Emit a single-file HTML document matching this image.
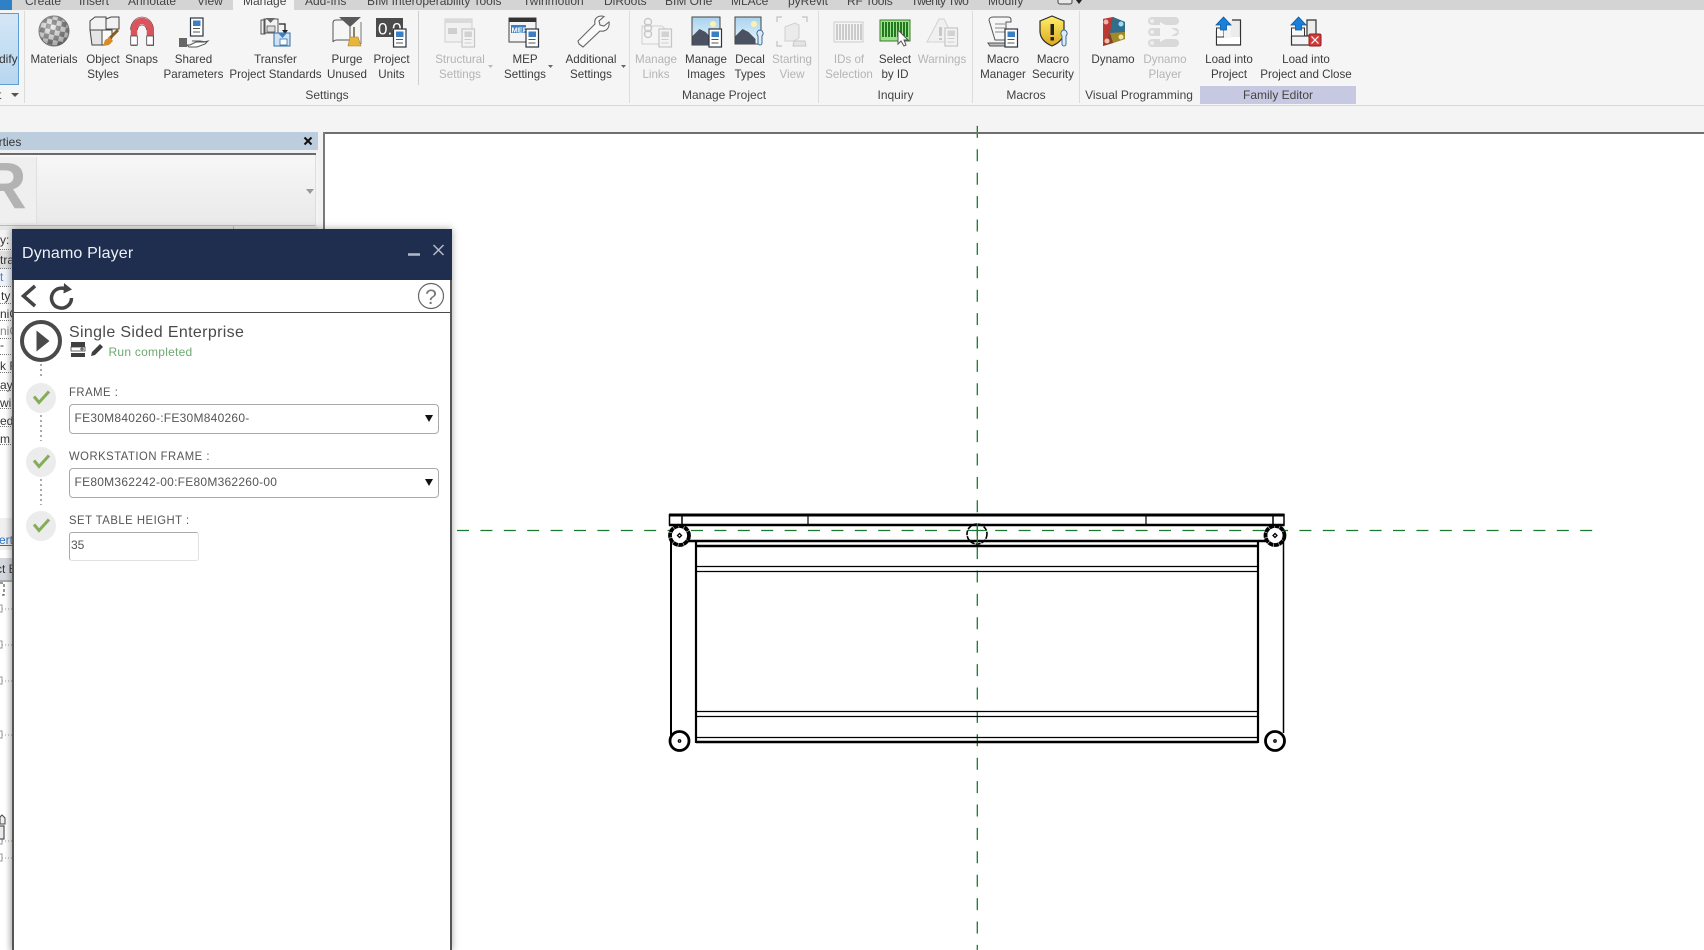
<!DOCTYPE html>
<html><head><meta charset="utf-8"><title>Dynamo Player</title>
<style>
*{box-sizing:border-box}
html,body{margin:0;padding:0;width:1704px;height:950px;overflow:hidden;background:#f4f4f4;font-family:"Liberation Sans",sans-serif;font-size:12px;color:#3b3b3b}
#p{position:relative;width:1704px;height:950px;overflow:hidden}
.a{position:absolute}
.t{position:absolute;top:-6px;line-height:15px;white-space:nowrap;color:#444}
.l{position:absolute;top:51.5px;font-size:11.6px;line-height:15px;text-align:center;white-space:nowrap;transform:translateX(-50%);color:#3c3c3c}
.d{color:#b4b4b4}
.g{position:absolute;top:87px;line-height:16px;white-space:nowrap;transform:translateX(-50%);color:#444}
.s{position:absolute;top:11px;width:1px;height:92px;background:#dcdcdc}
.c{position:absolute;white-space:nowrap;line-height:14px;color:#333}
.dl{position:absolute;left:0;width:13px;border-top:1px dotted #777}
.n{position:absolute;white-space:nowrap;color:#555;line-height:14px;letter-spacing:.55px;transform:scaleX(.94);transform-origin:0 50%}
.b{position:absolute;left:69px;width:370px;height:30px;border:1px solid #aaa;border-radius:4px;background:#fff;line-height:27px;padding-left:4.5px;color:#555;font-size:12px;white-space:nowrap;letter-spacing:.25px}
</style></head><body><div id="p">

<div class="a" style="left:0;top:0;width:1704px;height:10px;background:#d4d4d4"></div>
<div class="a" style="left:0;top:0;width:12px;height:10px;background:#2f80c4"></div>
<div class="a" style="left:233px;top:0;width:61px;height:11px;background:#f5f5f5"></div>
<div class="t" style="left:25px">Create</div><div class="t" style="left:79px">Insert</div><div class="t" style="left:128px">Annotate</div><div class="t" style="left:197px">View</div><div class="t" style="left:243px">Manage</div><div class="t" style="left:305px">Add-Ins</div><div class="t" style="left:367px">BIM Interoperability Tools</div><div class="t" style="left:523px">Twinmotion</div><div class="t" style="left:604px">DiRoots</div><div class="t" style="left:665px">BIM One</div><div class="t" style="left:731px">MLAce</div><div class="t" style="left:788px">pyRevit</div><div class="t" style="left:847px;letter-spacing:-.2px">RF Tools</div><div class="t" style="left:911px;letter-spacing:-.6px">Twenty Two</div><div class="t" style="left:988px">Modify</div>

<div class="a" style="left:0;top:11px;width:1704px;height:94px;background:#f5f5f5;border-bottom:0"></div>
<div class="a" style="left:0;top:105px;width:1704px;height:1px;background:#d6d6d6"></div>
<div class="a" style="left:-2px;top:13px;width:21px;height:72px;background:linear-gradient(#d4e7f6,#b8d6ef);border:1px solid #5c9fd6"></div>
<div class="l" style="left:0;color:#333;font-size:12px">Modify</div>
<div class="a" style="left:-2px;top:87px;line-height:16px;color:#333;font-size:12px">t</div>
<div class="a" style="left:11px;top:93px;width:0;height:0;border:4px solid transparent;border-top:4px solid #555"></div>

<div class="s" style="left:24px"></div><div class="s" style="left:418px;height:74px;background:#cfcfcf"></div><div class="s" style="left:629px"></div><div class="s" style="left:818px"></div><div class="s" style="left:972px"></div><div class="s" style="left:1079px"></div>
<div class="a" style="left:1200px;top:86px;width:156px;height:18px;background:#c7c9e2"></div>

<div class="l" style="left:54px">Materials</div>
<div class="l" style="left:103px">Object<br>Styles</div>
<div class="l" style="left:141.5px">Snaps</div>
<div class="l" style="left:193.5px">Shared<br>Parameters</div>
<div class="l" style="left:275.5px">Transfer<br>Project Standards</div>
<div class="l" style="left:347px">Purge<br>Unused</div>
<div class="l" style="left:391.5px">Project<br>Units</div>
<div class="l d" style="left:460px">Structural<br>Settings</div>
<div class="l" style="left:525px">MEP<br>Settings</div>
<div class="l" style="left:591px">Additional<br>Settings</div>
<div class="l d" style="left:656px">Manage<br>Links</div>
<div class="l" style="left:706px">Manage<br>Images</div>
<div class="l" style="left:750px">Decal<br>Types</div>
<div class="l d" style="left:792px">Starting<br>View</div>
<div class="l d" style="left:849px">IDs of<br>Selection</div>
<div class="l" style="left:895px">Select<br>by ID</div>
<div class="l d" style="left:942px">Warnings</div>
<div class="l" style="left:1003px">Macro<br>Manager</div>
<div class="l" style="left:1053px">Macro<br>Security</div>
<div class="l" style="left:1113px">Dynamo</div>
<div class="l d" style="left:1165px">Dynamo<br>Player</div>
<div class="l" style="left:1229px">Load into<br>Project</div>
<div class="l" style="left:1306px">Load into<br>Project and Close</div>

<div class="g" style="left:327px">Settings</div><div class="g" style="left:724px">Manage Project</div><div class="g" style="left:895.5px">Inquiry</div><div class="g" style="left:1026px">Macros</div><div class="g" style="left:1139px">Visual Programming</div><div class="g" style="left:1278px">Family Editor</div>

<!-- ribbon icons -->
<svg class="a" style="left:0;top:0" width="1704" height="110" viewBox="0 0 1704 110">
<defs>
<pattern id="ck" width="10" height="10" patternUnits="userSpaceOnUse" patternTransform="rotate(12 54 31)"><rect width="10" height="10" fill="#e8e8e8"/><rect width="5" height="5" fill="#707070"/><rect x="5" y="5" width="5" height="5" fill="#808080"/></pattern>
<g id="doc"><rect x="0" y="0" width="12.5" height="18" fill="#fff" stroke="#2c3440" stroke-width="1.2"/><rect x="2.5" y="2.5" width="7.5" height="5.5" fill="#3a7fc1"/><path d="M2.5 10.5h7M2.5 14h7" stroke="#555" fill="none"/></g>
<g id="gdoc"><rect x="0" y="0" width="12.5" height="18" fill="#f3f3f3" stroke="#c6c6c6" stroke-width="1.2"/><rect x="2.5" y="2.5" width="7.5" height="5.5" fill="#d2d2d2"/><path d="M2.5 10.5h7M2.5 14h7" stroke="#ccc" fill="none"/></g>
<linearGradient id="sky" x1="0" y1="0" x2="0" y2="1"><stop offset="0" stop-color="#a9d3ee"/><stop offset="1" stop-color="#eaf5fb"/></linearGradient>
<linearGradient id="shd" x1="0" y1="0" x2="0" y2="1"><stop offset="0" stop-color="#fff06a"/><stop offset="1" stop-color="#dca71c"/></linearGradient>
<radialGradient id="sph" cx=".4" cy=".35" r=".7"><stop offset="0" stop-color="#fff" stop-opacity=".35"/><stop offset="1" stop-color="#333" stop-opacity=".4"/></radialGradient>
</defs>
<!-- Materials -->
<circle cx="54" cy="31" r="15" fill="url(#ck)" stroke="#777"/><circle cx="54" cy="31" r="15" fill="url(#sph)"/>
<!-- Object styles -->
<g stroke="#444" stroke-width="1" fill="#f2f2f2"><path d="M90 21l5-4h11v13H90z"/><path d="M106 19l5-2h8v12h-13z"/><path d="M90 30h12v15H92z" fill="#e4e4e4"/><path d="M102 30h10v8l-6 7h-4z" fill="#fafafa"/></g>
<path d="M118 30l-9 9" stroke="#8a5a20" stroke-width="3"/><path d="M110 37l-5 3-2 6 6-1 4-4z" fill="#d98a2b"/>
<!-- Snaps -->
<path d="M134 46V30a8 9 0 0 1 16 0v16" fill="none" stroke="#d9545c" stroke-width="6.5"/><path d="M130.7 36h6.6v9h-6.6zM146.7 36h6.6v9h-6.6z" fill="#fff" stroke="#444" stroke-width=".8"/><path d="M130.5 30a11.5 13 0 0 1 23 0v16M137.5 30a4.5 5 0 0 1 9 0" fill="none" stroke="#5a2a2e" stroke-width=".6"/>
<!-- Shared parameters -->
<use href="#doc" x="190.5" y="18" /><path d="M187 45h3l6-3h8l4-1-3 3-8 3h-8z" fill="#fff" stroke="#555"/><path d="M192 41h8l6 1" fill="none" stroke="#555"/><rect x="179" y="38" width="8" height="9" fill="#666"/>
<!-- Transfer -->
<path d="M261 20h4v14h-4z M264 19h14v14h-14z" fill="#f2f2f2" stroke="#555"/><path d="M266 18h9l-4.5 5z" fill="#666"/><rect x="267" y="26" width="8" height="6" fill="#ddd" stroke="#444" stroke-width=".7"/><path d="M279 24h6v7" fill="none" stroke="#222" stroke-width="1.3"/><path d="M282 30h6l-3 4z" fill="#222"/><path d="M274 33h16v13h-16z" fill="#cfe3f4" stroke="#2c6ea8"/><path d="M278 33h9l-4.5 5z" fill="#3a7fc1"/><rect x="280" y="39" width="7" height="6" fill="#fff" stroke="#2c6ea8" stroke-width=".8"/>
<!-- Purge -->
<path d="M333 23c0-3 2-3 3-3h14v20h-13c-3 0-4 2-4 2z" fill="#f6f6f6" stroke="#555"/><path d="M339 17h22l-11 10z" fill="#5a5a5a"/><path d="M361 22v22" stroke="#777"/><path d="M354 27v10" stroke="#6b5a35" stroke-width="1.5"/><path d="M350 37h8l3 9h-13z" fill="#e8b53a" stroke="#a7801e" stroke-width=".6"/>
<!-- Units -->
<rect x="376" y="18" width="27" height="19" fill="#4b4b4b"/><text x="378" y="34.5" font-family="Liberation Sans" font-size="17" fill="#fff">0.0</text><use href="#doc" x="393.5" y="29"/>
<!-- Structural -->
<rect x="445" y="19" width="27" height="23" fill="#f1f1f1" stroke="#cfcfcf"/><path d="M445 19h27v4h-27z" fill="#dadada"/><rect x="448" y="28" width="9" height="6" fill="#cfcfcf"/><use href="#gdoc" x="462" y="29"/>
<!-- MEP -->
<rect x="509" y="18" width="27" height="24" fill="#f4f4f4" stroke="#444"/><rect x="509" y="18" width="27" height="4" fill="#333"/><rect x="511" y="25" width="15" height="8" fill="#3a7fc1"/><text x="511.5" y="32.5" font-family="Liberation Sans" font-size="7.5" font-weight="bold" fill="#fff">MEP</text><use href="#doc" x="526" y="29"/>
<!-- Wrench -->
<path d="M579 44l-1-3 17-17c-1-4 1-8 7-8l2 .5-5 4.5 1 4 4 1 5-4c1 6-3 10-9 9l-17 16z" fill="#fafafa" stroke="#666" stroke-width="1.1"/>
<!-- Manage links -->
<path d="M642 26h20l8 8v10h-28z" fill="#f5f5f5" stroke="#cfcfcf"/><circle cx="648" cy="22" r="3.5" fill="none" stroke="#c9c9c9" stroke-width="1.5"/><circle cx="648" cy="28" r="3.5" fill="none" stroke="#c9c9c9" stroke-width="1.5"/><circle cx="648" cy="34" r="3.5" fill="none" stroke="#c9c9c9" stroke-width="1.5"/><use href="#gdoc" x="659" y="29"/>
<!-- Manage images -->
<rect x="692" y="17" width="28" height="28" fill="url(#sky)" stroke="#444"/><circle cx="713" cy="24" r="3" fill="#fdf3b0"/><path d="M692.5 45v-9l7-7 6 3 7 7v6z" fill="#4a5161"/><use href="#doc" x="709" y="29"/>
<!-- Decal -->
<rect x="735" y="17" width="26" height="27" fill="url(#sky)" stroke="#444"/><circle cx="754" cy="24" r="3" fill="#fdf3b0"/><path d="M735.5 44v-8l7-7 6 3 7 7v5z" fill="#4a5161"/><path d="M760 30a3.5 3.5 0 0 0-2 6v7a2 2 0 0 0 4 0v-7a3.5 3.5 0 0 0-2-6z" fill="#dfeaf4" stroke="#3a6f9c"/>
<!-- Starting view -->
<path d="M777 22v-5h5M802 17h5v5M777 41v5h5" fill="none" stroke="#c2c2c2" stroke-width="1.2"/><path d="M785 27l10-4 4 2v13l-5 3h-9z" fill="#ebebeb" stroke="#d0d0d0"/><path d="M794 41h11l1 5h-13z" fill="#e4e4e4" stroke="#c8c8c8"/>
<!-- IDs -->
<rect x="834" y="22" width="29" height="20" fill="#f5f5f5" stroke="#cdcdcd"/><path d="M837 24v16M840 24v16M843 24v16M846 24v16M849 24v16M852 24v16M855 24v16M858 24v16M861 24v16" stroke="#bdbdbd" stroke-width="1.5"/>
<!-- Select by ID -->
<rect x="880" y="20" width="30" height="21" fill="#9fe08f" stroke="#3a7a2c"/><path d="M883 22v15M886 22v15M889 22v15M892 22v15M895 22v15M898 22v15M901 22v15M904 22v15M907 22v15" stroke="#136e10" stroke-width="1.8"/><path d="M898 30v14l3-3 3 5 2-1-2-5h4z" fill="#fff" stroke="#555"/>
<!-- Warnings -->
<path d="M927 42l12-23 5 0 8 16v7z" fill="#f0f0f0" stroke="#d2d2d2"/><path d="M939 27h3v9h-3zM939 38h3v2h-3z" fill="#c7c7c7"/><use href="#gdoc" x="945" y="28"/>
<!-- Macro manager -->
<path d="M989 20c0-2 2-3 4-3h15c2 0 3 1 3 3v2h-5v18h-11z" fill="#f6f6f6" stroke="#555"/><path d="M995 24h10M995 28h10M995 32h10" stroke="#888"/><path d="M988 43h19l-2 3h-15z" fill="#bbb" stroke="#555"/><use href="#doc" x="1005" y="29"/>
<!-- Macro security -->
<path d="M1052 16l-12 5v10c0 7 5 12 12 15 7-3 12-8 12-15V21z" fill="url(#shd)" stroke="#2c2c2c" stroke-width="1.2"/><path d="M1050.5 24h3.5v11h-3.5zM1050.5 37h3.5v3.5h-3.5z" fill="#222"/><path d="M1064 30a3.5 3.5 0 0 0-2 6v8a2 2 0 0 0 4 0v-8a3.5 3.5 0 0 0-2-6z" fill="#dfeaf4" stroke="#3a6f9c"/>
<!-- Dynamo -->
<path d="M1103 19l10-2 12 5v17l-12 4-10 3z" fill="#7d4a3e"/><path d="M1103 19l10-2-3 16-7 13z" fill="#b83a32"/><path d="M1113 17l12 5v10l-15 1z" fill="#2f6f8c"/><path d="M1110 33l15-1v7l-12 4z" fill="#9f8a2a"/><path d="M1103 46l7-13 3 10z" fill="#8a3f2c"/><circle cx="1106" cy="22" r="2.5" fill="#f3b0b0"/><circle cx="1121" cy="24" r="2.5" fill="#9fdcf2"/><circle cx="1121" cy="37" r="2.5" fill="#f3e6a0"/><circle cx="1107" cy="41" r="2.5" fill="#f2c0a0"/>
<!-- Player -->
<g fill="#d9d9d9"><rect x="1148" y="17" width="31" height="8" rx="4"/><rect x="1148" y="28" width="31" height="8" rx="4"/><rect x="1148" y="39" width="31" height="8" rx="4"/></g><path d="M1160 22l18 10-18 10z" fill="#f5f5f5"/><circle cx="1152" cy="21" r="2" fill="#eee"/><circle cx="1152" cy="32" r="2" fill="#eee"/><circle cx="1152" cy="43" r="2" fill="#eee"/>
<!-- Load into project -->
<path d="M1232 20h8.5v25h-24V31h7.5" fill="#ececec" stroke="#333" stroke-width="1.2"/><rect x="1217" y="37" width="23" height="7" fill="#fff"/><rect x="1216.5" y="28" width="7.5" height="9" fill="#f8f8f8" stroke="#333"/><path d="M1224 26h7v12h-7z" fill="#f4f4f4"/><path d="M1223.5 17l-7.5 8h4.5v5h6v-5h4.5z" fill="#1a7fd8" stroke="#0b5a9e" stroke-width=".8"/>
<!-- Load into close -->
<path d="M1307 20h9v16h-9z" fill="#ececec" stroke="#333" stroke-width="1.2"/><rect x="1291.5" y="36" width="24" height="9" fill="#f4f4f4" stroke="#333" stroke-width="1.2"/><rect x="1291.5" y="28" width="13" height="8" fill="#f8f8f8" stroke="#333"/><path d="M1298.5 17l-7.5 8h4.5v5h6v-5h4.5z" fill="#1a7fd8" stroke="#0b5a9e" stroke-width=".8"/><rect x="1309" y="34" width="12" height="12" rx="1.5" fill="#d23a3a" stroke="#8f1f1f"/><path d="M1311.5 36.5l7 7M1318.5 36.5l-7 7" stroke="#fff" stroke-width="1.2"/>
<!-- dropdown arrows -->
<path d="M488 65h5l-2.5 3z" fill="#bbb"/><path d="M548 65h5l-2.5 3zM621 65h5l-2.5 3z" fill="#666"/>
<!-- tab icon -->
<rect x="1058" y="-4" width="14" height="8" rx="2" fill="#e8e8e8" stroke="#444"/><path d="M1076 0h6l-3 4z" fill="#222"/>
</svg>

<!-- properties panel -->
<div class="a" style="left:0;top:132px;width:318px;height:18px;background:#bccede"></div>
<div class="a" style="left:-8px;top:135px;line-height:14px;color:#333;font-size:12px">erties</div>
<svg class="a" style="left:303px;top:136px" width="10" height="10"><path d="M1.5 1.5l7 7M8.5 1.5l-7 7" stroke="#111" stroke-width="2"/></svg>
<div class="a" style="left:0;top:150px;width:318px;height:3px;background:#eef0f2"></div>
<div class="a" style="left:0;top:153px;width:316px;height:2px;background:#6a6a6a"></div>
<div class="a" style="left:0;top:155px;width:316px;height:71px;background:linear-gradient(#f7f7f7,#e9e9e9);border-right:1px solid #ddd;border-bottom:1px solid #bbb"></div>
<div class="a" style="left:0;top:157px;width:37px;height:66px;background:#efefef;border-right:1px solid #e0e0e0;overflow:hidden"><div style="position:absolute;left:-21px;top:-10px;font:bold 66px 'Liberation Sans',sans-serif;color:#b3b3b3">R</div></div>
<div class="a" style="left:306px;top:189px;width:0;height:0;border:4.5px solid transparent;border-top:5px solid #9a9a9a"></div>
<div class="a" style="left:0;top:226px;width:318px;height:4px;background:#e6e6e6"></div>
<div class="a" style="left:233px;top:226px;width:1px;height:4px;background:#bbb"></div>
<div class="a" style="left:318px;top:132px;width:5px;height:98px;background:#f2f2f2"></div>

<!-- canvas -->
<div class="a" style="left:323px;top:133px;width:1381px;height:817px;background:#fff"></div>
<svg class="a" style="left:0;top:0" width="1704" height="950" viewBox="0 0 1704 950">
<path d="M977.3 125.9V950" stroke="#1b7a30" stroke-width="1.3" stroke-dasharray="12 11.4" fill="none"/>
<path d="M457 530.5H1597" stroke="#1b7a30" stroke-width="1.3" stroke-dasharray="12 11.4" fill="none"/>
<g fill="none" stroke="#000">
<path d="M669 515H1284.5" stroke-width="3"/>
<path d="M669 525H1284.5" stroke-width="2.5"/>
<path d="M669.5 514v11.5M682 515v10M1273 515v10M1284 514v11.5" stroke-width="1.5"/>
<path d="M808 515v10M1146 515v10" stroke-width="1.2"/>
<path d="M671 541H1284" stroke-width="2.4"/>
<path d="M696 546H1258" stroke-width="2.4"/>
<path d="M696 566.5H1258M696 571.5H1258" stroke-width="1.2"/>
<path d="M696 711.5H1258M696 716.5H1258M696 737.5H1258" stroke-width="1.2"/>
<path d="M696 742H1258" stroke-width="2.4"/>
<path d="M671 541V736" stroke-width="2"/>
<path d="M696 541V743" stroke-width="2.2"/>
<path d="M1258 541V743" stroke-width="2.2"/>
<path d="M1283.5 541V733" stroke-width="1.5"/>
</g>
<g fill="#fff" stroke="#000">
<circle cx="679.5" cy="535.5" r="9.5" stroke-width="3.8" stroke-dasharray="5 .5"/>
<circle cx="1275" cy="535.5" r="9.5" stroke-width="3.8" stroke-dasharray="5 .5"/>
<circle cx="679.5" cy="741" r="9.5" stroke-width="2.8"/>
<circle cx="1275" cy="741" r="9.5" stroke-width="2.8"/>
</g>
<circle cx="977" cy="534" r="10" fill="none" stroke="#000" stroke-width="1.6" stroke-dasharray="5 1"/>
<path d="M967 530.5h20" stroke="#1b7a30" stroke-width="1"/>
<path d="M977.3 524v20" stroke="#1b7a30" stroke-width="1.3"/>
<g fill="none" stroke="#000" stroke-width="1.3"><path d="M679.5 533.5l2 2-2 2-2-2zM1275 533.5l2 2-2 2-2-2z"/><circle cx="679.5" cy="741" r="1.2"/><circle cx="1275" cy="741" r="1.2"/></g>
</svg>
<div class="a" style="left:323px;top:132px;width:1381px;height:2px;background:#6f6f6f"></div>
<div class="a" style="left:323px;top:132px;width:2px;height:100px;background:#7a7a7a"></div>

<!-- left strip under panel -->
<div class="a" style="left:0;top:230px;width:13px;height:720px;background:#fff;overflow:hidden">
 <div class="a" style="left:0;top:0;width:13px;height:21px;background:#f3f3f3"></div>
 <div class="a" style="left:0;top:21px;width:13px;height:18px;background:#dedede"></div>
 <div class="a" style="left:0;top:39px;width:13px;height:17px;background:#edf3fa"></div>
 <div class="c" style="left:0;top:3px">y:</div>
 <div class="c" style="left:0;top:23px">tra</div>
 <div class="c" style="left:-6px;top:40px;color:#5a7fb5">ct</div>
 <div class="c" style="left:1px;top:59px">ty</div>
 <div class="c" style="left:0;top:77px">niC</div>
 <div class="c" style="left:0;top:94px;color:#888">niC</div>
 <div class="c" style="left:0;top:108px">-</div>
 <div class="c" style="left:0;top:129px">k F</div>
 <div class="c" style="left:0;top:148px">ays</div>
 <div class="c" style="left:0;top:166px">wi</div>
 <div class="c" style="left:0;top:184px">ed</div>
 <div class="c" style="left:0;top:202px">m</div>
 <div class="dl" style="top:19px"></div><div class="dl" style="top:38px"></div><div class="dl" style="top:56px"></div><div class="dl" style="top:73px"></div><div class="dl" style="top:90px"></div><div class="dl" style="top:108px"></div><div class="dl" style="top:124px"></div><div class="dl" style="top:142px"></div><div class="dl" style="top:160px"></div><div class="dl" style="top:178px"></div><div class="dl" style="top:196px"></div><div class="dl" style="top:214px"></div>
 <div class="a" style="left:0;top:288px;width:13px;height:32px;background:#f0f0f0"></div>
 <div class="c" style="left:-1px;top:303px;color:#2f6fc0;text-decoration:underline">erti</div>
 <div class="a" style="left:0;top:328px;width:13px;height:22px;background:#d4d8de"></div>
 <div class="c" style="left:-4px;top:332px">ct E</div>
 <div class="a" style="left:0;top:350px;width:13px;height:2px;background:#aaa"></div>
 <svg class="a" style="left:0;top:350px" width="13" height="370"><path d="M0 3h4v12H0" fill="none" stroke="#333" stroke-dasharray="3 2"/>
  <g fill="none" stroke="#999"><path d="M0 25h2v7H0M0 61h2v7H0M0 97h2v7H0M0 151h2v7H0M0 257h2v7H0M0 274h2v7H0"/><path d="M2 29h10M2 65h10M2 101h10M2 155h10M2 261h10M2 278h10" stroke-dasharray="1 2"/></g>
  <path d="M0 237l2-2 3 3v6H0z" fill="#eee" stroke="#444"/><rect x="-2" y="246" width="6" height="13" fill="#e8eaf0" stroke="#333"/></svg>
 <div class="a" style="left:5px;top:0;width:8px;height:720px;background:linear-gradient(90deg,rgba(120,120,120,0),rgba(120,120,120,.18))"></div>
</div>

<!-- Dynamo Player -->
<div class="a" style="left:12px;top:229px;width:440px;height:721px;background:#fff;border:1px solid #555;border-width:0 2px 0 2px;box-shadow:0 0 7px rgba(0,0,0,.35)"></div>
<div class="a" style="left:12px;top:229px;width:440px;height:51px;background:#1f2d4e"></div>
<div class="a" style="left:22px;top:244px;color:#eef0f5;font-size:16px;line-height:20px;letter-spacing:.15px;white-space:nowrap">Dynamo Player</div>
<svg class="a" style="left:400px;top:240px" width="50" height="24"><path d="M8 14.5h12" stroke="#b4b9c6" stroke-width="2.5"/><path d="M33.5 5l10 10M43.5 5l-10 10" stroke="#b4b9c6" stroke-width="1.5"/></svg>
<div class="a" style="left:14px;top:312px;width:436px;height:1px;background:#4a4a4a"></div>
<svg class="a" style="left:14px;top:280px" width="436" height="230" viewBox="14 280 436 230">
<path d="M35 286L23.5 296 35 306" fill="none" stroke="#444" stroke-width="3.5"/>
<path d="M68 290.5A10 10 0 1 0 71.5 298" fill="none" stroke="#444" stroke-width="3.5"/>
<path d="M64 283l8 6.5-8.5 4z" fill="#444"/>
<circle cx="431" cy="296" r="12.5" fill="#fff" stroke="#666" stroke-width="1.2"/>
<text x="431" y="304" text-anchor="middle" font-family="Liberation Sans" font-size="21" fill="#777">?</text>
<circle cx="41" cy="341" r="19" fill="#fff" stroke="#4a4a4a" stroke-width="4"/>
<path d="M36.5 330.5l13 10.5-13 10.5z" fill="#4a4a4a"/>
<rect x="71" y="342" width="14" height="5" fill="#3f3f3f"/><rect x="71" y="347" width="14" height="4" fill="#fff" stroke="#3f3f3f" stroke-width=".8"/><rect x="71" y="353" width="14" height="4" fill="#3f3f3f"/><path d="M80 349h4M82 347v4" stroke="#3f3f3f"/>
<path d="M91 356l1-4 8-8 3 3-8 8z" fill="#3f3f3f"/>
<path d="M41 364v13" stroke="#aaa" stroke-width="2" stroke-dasharray="2 3"/>
<path d="M41 415v26M41 479v26" stroke="#aaa" stroke-width="2" stroke-dasharray="2 3"/>
<circle cx="41" cy="398" r="15" fill="#ececec"/><circle cx="41" cy="462" r="15" fill="#ececec"/>
<path d="M34 396.5l5 6 10-11M34 460.5l5 6 10-11" fill="none" stroke="#84ad5a" stroke-width="3"/>
</svg>
<svg class="a" style="left:14px;top:505px" width="60" height="45" viewBox="14 505 60 45"><circle cx="41" cy="526" r="15" fill="#ececec"/><path d="M34 524.5l5 6 10-11" fill="none" stroke="#84ad5a" stroke-width="3"/></svg>
<div class="a" style="left:69px;top:322.5px;font-size:16px;line-height:20px;letter-spacing:.35px;color:#4a4a4a;white-space:nowrap">Single Sided Enterprise</div>
<div class="a" style="left:108.5px;top:344.5px;color:#6caa70;line-height:14px;white-space:nowrap;letter-spacing:.25px">Run completed</div>
<div class="n" style="left:69px;top:385px">FRAME :</div>
<div class="b" style="top:404px">FE30M840260-:FE30M840260-</div>
<div class="a" style="left:425px;top:415px;width:0;height:0;border:4px solid transparent;border-top:7px solid #111"></div>
<div class="n" style="left:69px;top:449px">WORKSTATION FRAME :</div>
<div class="b" style="top:468px">FE80M362242-00:FE80M362260-00</div>
<div class="a" style="left:425px;top:479px;width:0;height:0;border:4px solid transparent;border-top:7px solid #111"></div>
<div class="n" style="left:69px;top:513px">SET TABLE HEIGHT :</div>
<div class="a" style="left:69px;top:532px;width:130px;height:29px;background:#fff;border:1px solid #e2e2e2;border-top-color:#aaa;border-left-color:#aaa;border-radius:3px;line-height:25px;padding-left:1px;color:#555">35</div>

</div></body></html>
